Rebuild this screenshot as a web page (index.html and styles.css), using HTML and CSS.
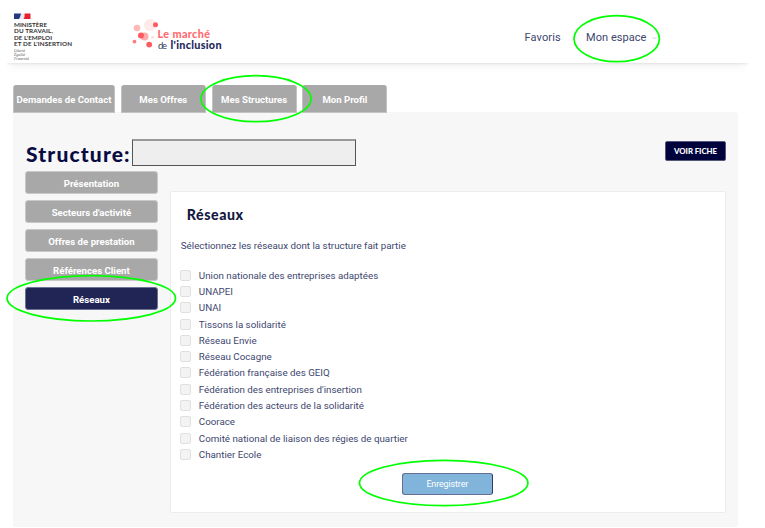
FILE: index.html
```html
<!DOCTYPE html>
<html lang="fr">
<head>
<meta charset="utf-8">
<title>Le marché de l'inclusion</title>
<link rel="stylesheet" href="styles.css">
</head>
<body>
<header class="header">
  <svg class="ministry" width="62" height="52" viewBox="0 0 62 52">
    <path fill="#25377f" d="M0 .5h7v5.500H0z"/>
    <path fill="#e8e8ee" d="M7 .5h3V6H5l1-2z"/>
    <path fill="#e3242f" d="M10.500 .5H16.500V6H9.500l1-2z"/>
    <g class="ministry-name">
      <text x="0" y="13.500" textLength="33">MINISTÈRE</text>
      <text x="0" y="20" textLength="39">DU TRAVAIL,</text>
      <text x="0" y="26.500" textLength="38">DE L'EMPLOI</text>
      <text x="0" y="33" textLength="58">ET DE L'INSERTION</text>
    </g>
    <g class="motto">
      <text x="0" y="39" textLength="11">Liberté</text>
      <text x="0" y="43" textLength="11">Égalité</text>
      <text x="0" y="47" textLength="15">Fraternité</text>
    </g>
  </svg>
  <svg class="brand" width="96" height="34" viewBox="0 0 96 34">
    <circle cx="18" cy="8" r="6" fill="#ffeaea"/>
    <circle cx="5" cy="11" r="3.300" fill="#ffb9b9"/>
    <circle cx="23.500" cy="7.800" r="2.500" fill="#ff5a5f"/>
    <circle cx="12.500" cy="19.500" r="4" fill="#ffacac"/>
    <circle cx="9" cy="18.500" r="3" fill="#ff5a5f"/>
    <circle cx="20.500" cy="20.500" r="1.400" fill="#ffdcdc"/>
    <circle cx="2.500" cy="24.600" r="1.900" fill="#ff7b7f"/>
    <circle cx="17.200" cy="27.600" r="2.900" fill="#ff5a5f"/>
    <text class="brand-top" x="25.500" y="20.700" textLength="52.500">Le marché</text>
    <text class="brand-de" x="26" y="31.500" textLength="9">de</text>
    <text class="brand-bottom" x="38.500" y="31.500" textLength="51">l'inclusion</text>
  </svg>
  <nav class="nav">
    <a class="nav-fav">Favoris</a>
    <a class="nav-space">Mon espace</a>
    <svg class="chevron" width="5" height="4" viewBox="0 0 5 4"><path d="M.5 1l2 2 2-2" fill="none" stroke="#c4c6d2" stroke-width=".8"/></svg>
  </nav>
</header>
<nav class="tabs">
  <a class="tab tab-wide">Demandes de Contact</a>
  <a class="tab">Mes Offres</a>
  <a class="tab">Mes Structures</a>
  <a class="tab">Mon Profil</a>
</nav>
<main class="panel">
  <div class="title-row">
    <h1>Structure:</h1>
    <div class="name-box"></div>
    <a class="view">VOIR FICHE</a>
  </div>
  <div class="columns">
    <nav class="side">
      <a>Présentation</a>
      <a>Secteurs d'activité</a>
      <a>Offres de prestation</a>
      <a>Références Client</a>
      <a class="active">Réseaux</a>
    </nav>
    <section class="card">
      <h2>Réseaux</h2>
      <p>Sélectionnez les réseaux dont la structure fait partie</p>
      <ul>
        <li><i></i><span>Union nationale des entreprises adaptées</span></li>
        <li><i></i><span>UNAPEI</span></li>
        <li><i></i><span>UNAI</span></li>
        <li><i></i><span>Tissons la solidarité</span></li>
        <li><i></i><span>Réseau Envie</span></li>
        <li><i></i><span>Réseau Cocagne</span></li>
        <li><i></i><span>Fédération française des GEIQ</span></li>
        <li><i></i><span>Fédération des entreprises d'insertion</span></li>
        <li><i></i><span>Fédération des acteurs de la solidarité</span></li>
        <li><i></i><span>Coorace</span></li>
        <li><i></i><span>Comité national de liaison des régies de quartier</span></li>
        <li><i></i><span>Chantier Ecole</span></li>
      </ul>
      <button class="save">Enregistrer</button>
    </section>
  </div>
</main>
<svg class="marks" width="765" height="528" viewBox="0 0 765 528">
  <ellipse cx="616.700" cy="38.700" rx="42.700" ry="23"/>
  <ellipse cx="256" cy="98.700" rx="55" ry="23"/>
  <ellipse cx="91.300" cy="298.300" rx="84.200" ry="22.700"/>
  <ellipse cx="443.700" cy="483" rx="84.200" ry="22.700"/>
</svg>
</body>
</html>
```
FILE: styles.css
```css
* { box-sizing: border-box; }
body {
  margin: 0;
  width: 765px;
  height: 528px;
  overflow: hidden;
  position: relative;
  background: #fff;
  color: #40466f;
  font-family: Roboto, "Liberation Sans", sans-serif;
}
.header {
  display: flex;
  align-items: flex-start;
  margin: 0 17px 0 7px;
  height: 63px;
  padding: 13px 0 0 7px;
  box-shadow: 0 1px 2px rgba(0, 0, 0, .08), 0 5px 10px -3px rgba(0, 0, 0, .07);
  clip-path: inset(0 0 -16px 0);
}
.ministry, .brand { font-family: Lato, sans-serif; overflow: visible; }
.ministry-name { font-size: 6.300px; font-weight: 700; fill: #333; }
.motto { font-family: "Liberation Serif", serif; font-style: italic; font-size: 3.800px; fill: #555; }
.brand { margin: 4px 0 0 56px; }
.brand-top { font-size: 10.800px; font-weight: 900; fill: #ff6b6f; }
.brand-de { font-size: 9.500px; fill: #343a66; }
.brand-bottom { font-size: 10.800px; font-weight: 900; fill: #25285c; }
.nav {
  display: flex;
  align-items: center;
  margin: 16px 91px 0 auto;
  height: 16px;
  font-size: 11px;
}
.nav-fav { width: 61.500px; letter-spacing: .12px; }
.nav-space { width: 66px; letter-spacing: .05px; }
.chevron { flex: none; margin-top: 2px; }
.tabs { display: flex; gap: 6px; margin: 22px 0 0 13px; }
.tab {
  width: 85px;
  height: 28px;
  line-height: 29px;
  background: #a8a8a8;
  border: 1px solid #c3c3c3;
  border-width: 0 1px 1px;
  border-radius: 3px 3px 0 0;
  color: #fff;
  font-size: 9.600px;
  font-weight: 700;
  text-align: center;
  white-space: nowrap;
}
.tab-wide { width: 102px; }
.tab + .tab { margin-left: -.2px; }
.panel {
  margin: -1px 27px 0 13px;
  height: 415px;
  padding: 27px 12px 0;
  background: #f7f7f7;
  border-radius: 0 3px 2px 2px;
}
.title-row { display: flex; height: 32px; }
h1 {
  margin: 0;
  width: 107px;
  padding-left: 1px;
  line-height: 29px;
  font-family: Lato, sans-serif;
  font-weight: 900;
  font-size: 21px;
  letter-spacing: 1.150px;
  color: #080c42;
  white-space: nowrap;
}
.name-box {
  width: 224px;
  height: 27px;
  background: #eee;
  border: 1px solid #555;
  border-top: 2px solid #999;
}
.view {
  margin: 2px 0 0 auto;
  width: 61px;
  height: 20px;
  line-height: 19px;
  background: #00033b;
  border: 1px solid #555879;
  border-radius: 2px;
  color: #fff;
  font-family: Lato, sans-serif;
  font-size: 7.800px;
  font-weight: 900;
  text-align: center;
  letter-spacing: -.05px;
}
.columns { display: flex; gap: 12px; }
.side { display: flex; flex-direction: column; gap: 6px; width: 133px; }
.side a {
  height: 23px;
  line-height: 23px;
  background: #a8a8a8;
  border: 1px solid #c8c8c8;
  border-radius: 3px;
  color: #fff;
  font-size: 9.650px;
  font-weight: 700;
  text-align: center;
}
.side .active { background: #202556; border-color: #6d7194; }
.card {
  width: 557px;
  height: 322px;
  margin-top: 20px;
  padding: 12px 10px 0;
  background: #fff;
  border: 1px solid #ececec;
  border-radius: 2px;
  display: flex;
  flex-direction: column;
}
h2 {
  margin: 0 0 0 6px;
  line-height: 22px;
  font-family: Lato, sans-serif;
  font-weight: 900;
  font-size: 14.200px;
  letter-spacing: .55px;
  color: #151942;
}
.card p { margin: 13px 0 0; line-height: 14px; font-size: 9.780px; }
.card ul { list-style: none; margin: 14px 0 0; padding: 0; }
.card li {
  display: flex;
  align-items: center;
  height: 16.300px;
  font-size: 9.780px;
  white-space: nowrap;
}
.card i {
  width: 11px;
  height: 11px;
  margin: 0 8px 0 -1px;
  background: #f3f3f3;
  border: 1px solid #e0e0e0;
  border-radius: 2px;
}
.save {
  width: 91px;
  height: 22px;
  flex: none;
  margin: 10px 0 0 221px;
  padding: 0;
  background: #80b4db;
  border: 1px solid #666d98;
  border-right-color: #343966;
  border-radius: 3px;
  color: #fff;
  font: 9px Roboto, sans-serif;
  letter-spacing: -.15px;
}
.marks { position: absolute; inset: 0; pointer-events: none; }
.marks ellipse { fill: none; stroke: #0f0; stroke-width: 1.700; }
```
